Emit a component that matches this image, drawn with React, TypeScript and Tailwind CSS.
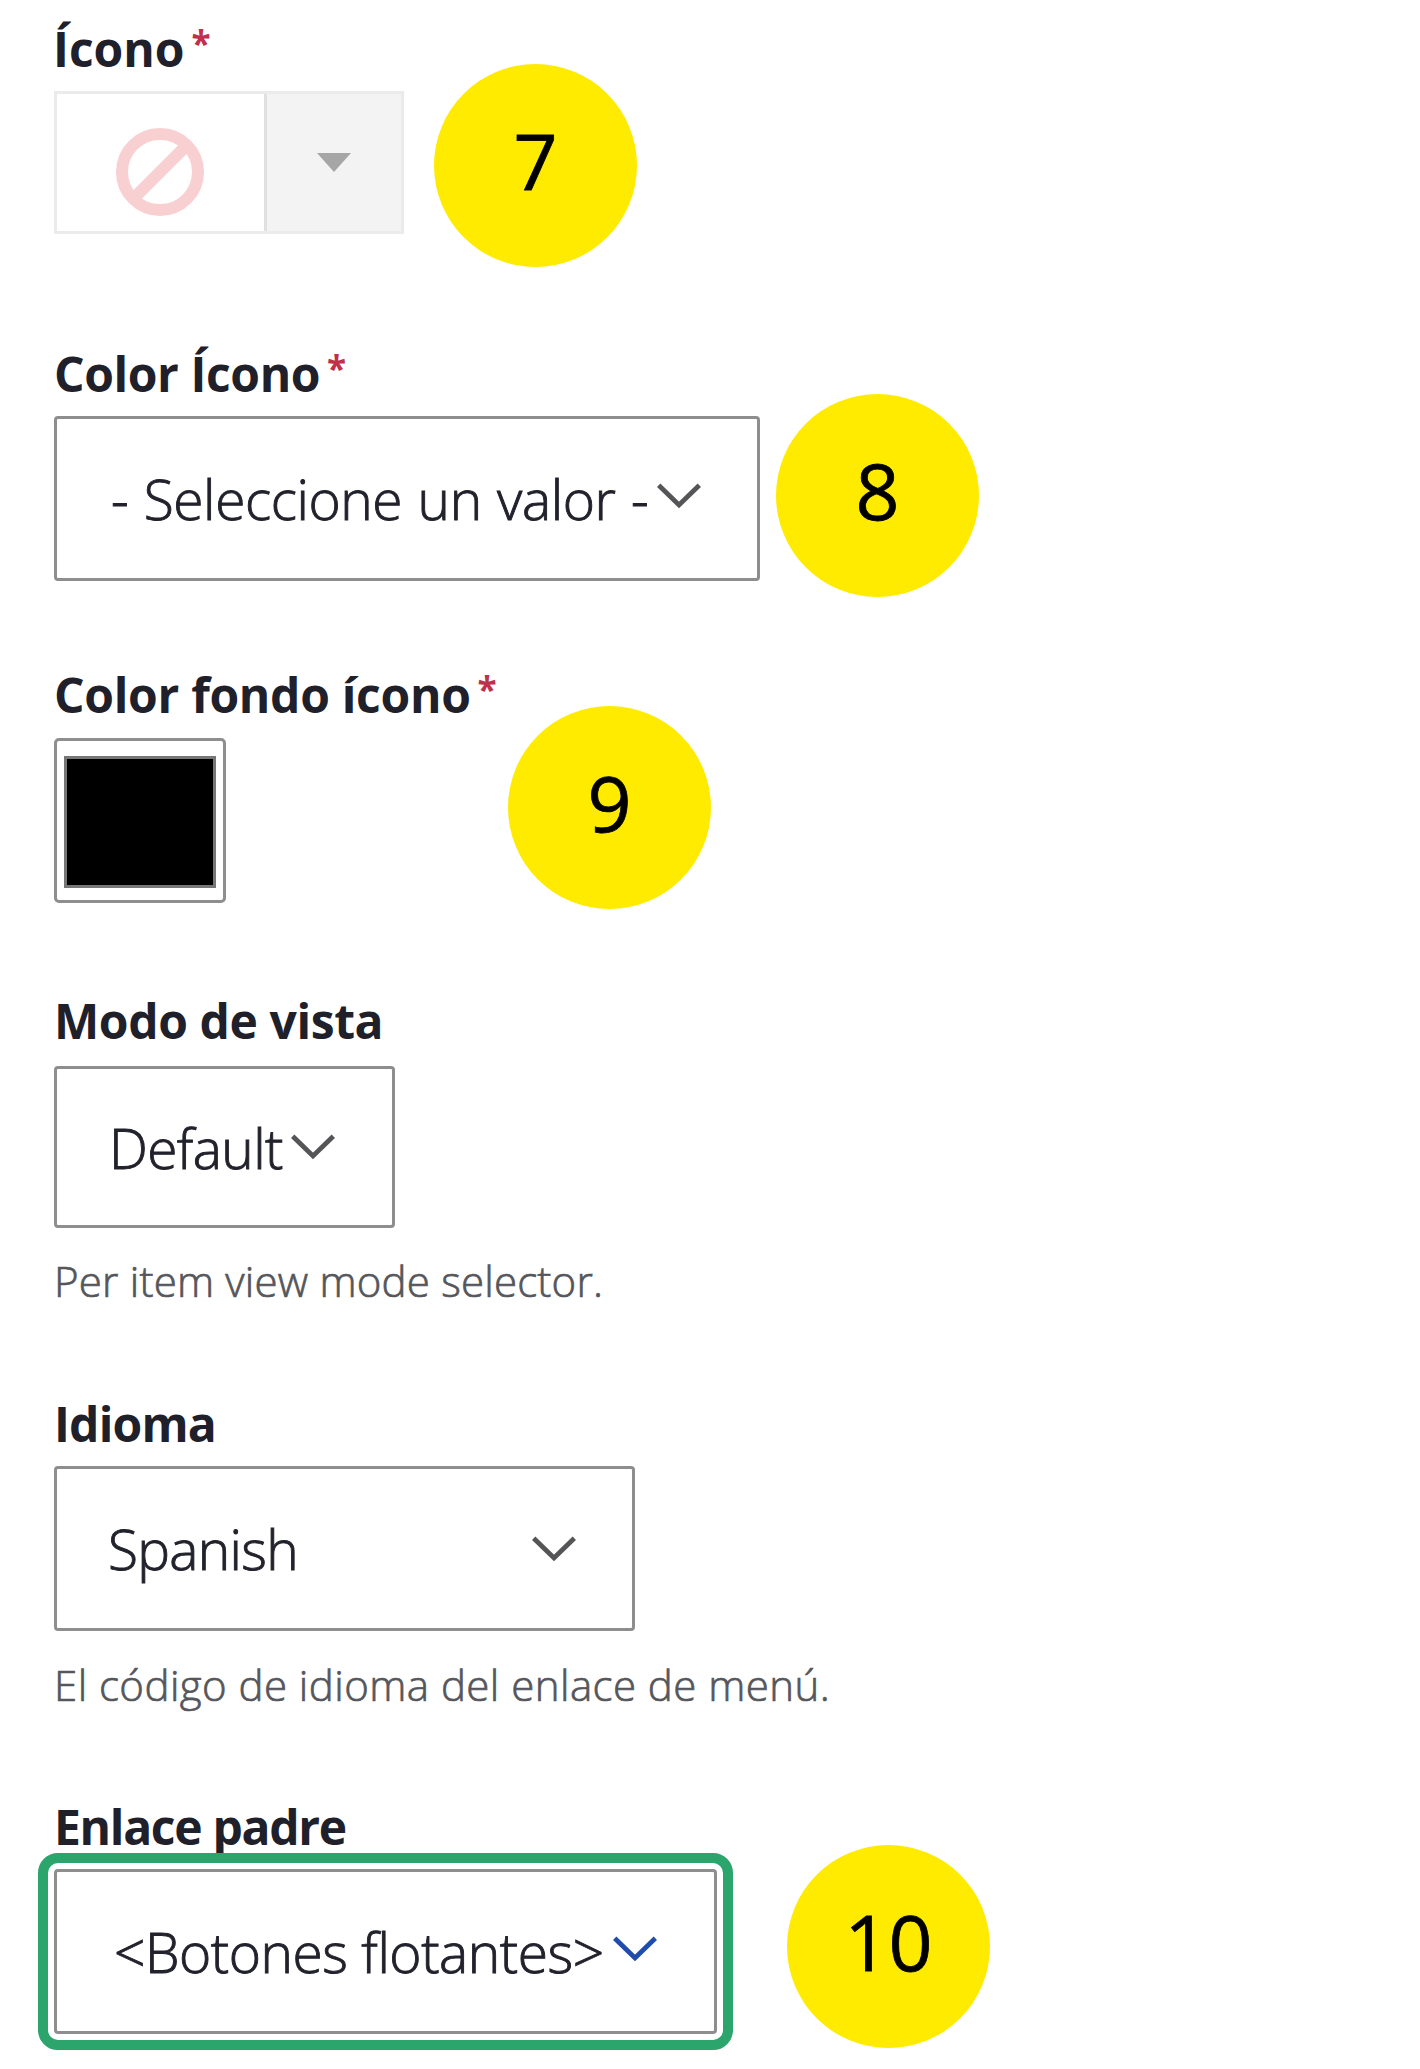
import type { ReactNode } from "react";

function Label({ children, required, className = "" }: { children: ReactNode; required?: boolean; className?: string }) {
  return (
    <div className={`flex h-12 items-start pt-0.5 text-[48px] leading-[48px] font-bold whitespace-nowrap text-[#20202a] ${className}`}>
      <span>{children}</span>
      {required && <span className="-mt-[6px] ml-[7px] text-[35px] font-bold text-[#c0304a]">*</span>}
    </div>
  );
}

function Badge({ children, className }: { children: ReactNode; className: string }) {
  return (
    <div className={`flex size-[203px] shrink-0 items-center justify-center rounded-full bg-[#ffeb00] pb-2.5 text-[77px] leading-none text-black [-webkit-text-stroke:0.8px] ${className}`}>
      {children}
    </div>
  );
}

function Chevron({ className = "text-[#555558]" }: { className?: string }) {
  return (
    <svg viewBox="0 0 44 26" className={`h-[26px] w-[44px] shrink-0 ${className}`} fill="none" stroke="currentColor" strokeWidth="4.8">
      <path d="M1.7 2.2 22 22 42.3 2.2" />
    </svg>
  );
}

function Select({ children, className }: { children: ReactNode; className: string }) {
  return (
    <div className={`flex shrink-0 items-center justify-between rounded-[4px] border-[3px] border-[#8e8e8e] bg-white text-[55px] leading-none font-light whitespace-nowrap text-[#22222c] [-webkit-text-stroke:0.9px] ${className}`}>
      {children}
    </div>
  );
}

function Help({ children, className }: { children: ReactNode; className: string }) {
  return <p className={`text-[42px] leading-[42px] font-light whitespace-nowrap text-[#55565b] [-webkit-text-stroke:0.7px] ${className}`}>{children}</p>;
}

export default function App() {
  return (
    <main className="flex h-[2069px] w-[1420px] flex-col overflow-hidden bg-white pt-[23px] pl-[54px] font-['Open_Sans',sans-serif]">
      <section className="h-[325px]">
        <Label required className="-ml-px">Ícono</Label>
        <div className="mt-5 flex items-start">
          <div className="flex h-[143px] w-[350px] border-[3px] border-[#ebebeb]">
            <div className="flex w-[207px] items-center justify-center pt-[18px] pr-[2px]">
              <svg viewBox="0 0 88 88" className="size-[88px]" fill="none" stroke="#f9d0d1" strokeWidth="12">
                <circle cx="44" cy="44" r="38" />
                <path d="M18 70 70 18" />
              </svg>
            </div>
            <div className="flex flex-1 items-center justify-center border-l-[3px] border-[#e0e0e0] bg-[#f3f3f3]">
              <svg viewBox="0 0 34 19" className="h-[19px] w-[34px]" fill="#a6a6a6">
                <path d="M0 0H34L17 19Z" />
              </svg>
            </div>
          </div>
          <Badge className="-mt-[27px] ml-[30px]">7</Badge>
        </div>
      </section>

      <section className="h-[321px]">
        <Label required className="-tracking-[0.4px]">Color Ícono</Label>
        <div className="mt-5 flex items-start">
          <Select className="h-[165px] w-[706px] pr-14 pb-px pl-[54px]">
            <span className="-tracking-[0.4px] [word-spacing:1.5px]">- Seleccione un valor -</span>
            <Chevron className="-mt-1 text-[#555558]" />
          </Select>
          <Badge className="-mt-[22px] ml-4">8</Badge>
        </div>
      </section>

      <section className="h-[326px]">
        <Label required className="-tracking-[0.3px]">Color fondo ícono</Label>
        <div className="mt-[21px] flex items-start">
          <div className="h-[165px] w-[172px] rounded-[5px] border-[3px] border-[#8e8e8e] px-[7px] pt-[15px] pb-3">
            <div className="h-full border-[3px] border-[#777777] bg-black" />
          </div>
          <Badge className="-mt-8 ml-[282px]">9</Badge>
        </div>
      </section>

      <section className="h-[403px]">
        <Label className="-tracking-[0.4px]">Modo de vista</Label>
        <Select className="mt-[23px] h-[162px] w-[341px] pr-[57px] pl-[52px]">
          <span className="-tracking-[0.6px]">Default</span>
          <Chevron />
        </Select>
        <Help className="mt-8 tracking-[0.2px]">Per item view mode selector.</Help>
      </section>

      <section className="h-[403px]">
        <Label className="-tracking-[0.8px]">Idioma</Label>
        <Select className="mt-5 h-[165px] w-[581px] pr-14 pl-[51px]">
          <span className="-tracking-[0.7px]">Spanish</span>
          <Chevron />
        </Select>
        <Help className="mt-[33px] tracking-[0.45px]">El código de idioma del enlace de menú.</Help>
      </section>

      <section className="h-[268px]">
        <Label className="-tracking-[1.3px]">Enlace padre</Label>
        <div className="mt-5 flex items-start">
          <Select className="h-[165px] w-[663px] pr-[57px] pb-px pl-[57px] outline-[10px] outline-offset-[6px] outline-[#2ca56c]">
            <span className="-tracking-[0.45px]">&lt;Botones flotantes&gt;</span>
            <Chevron className="-mt-1 text-[#1f4cad]" />
          </Select>
          <Badge className="-mt-6 ml-[70px]">10</Badge>
        </div>
      </section>
    </main>
  );
}
